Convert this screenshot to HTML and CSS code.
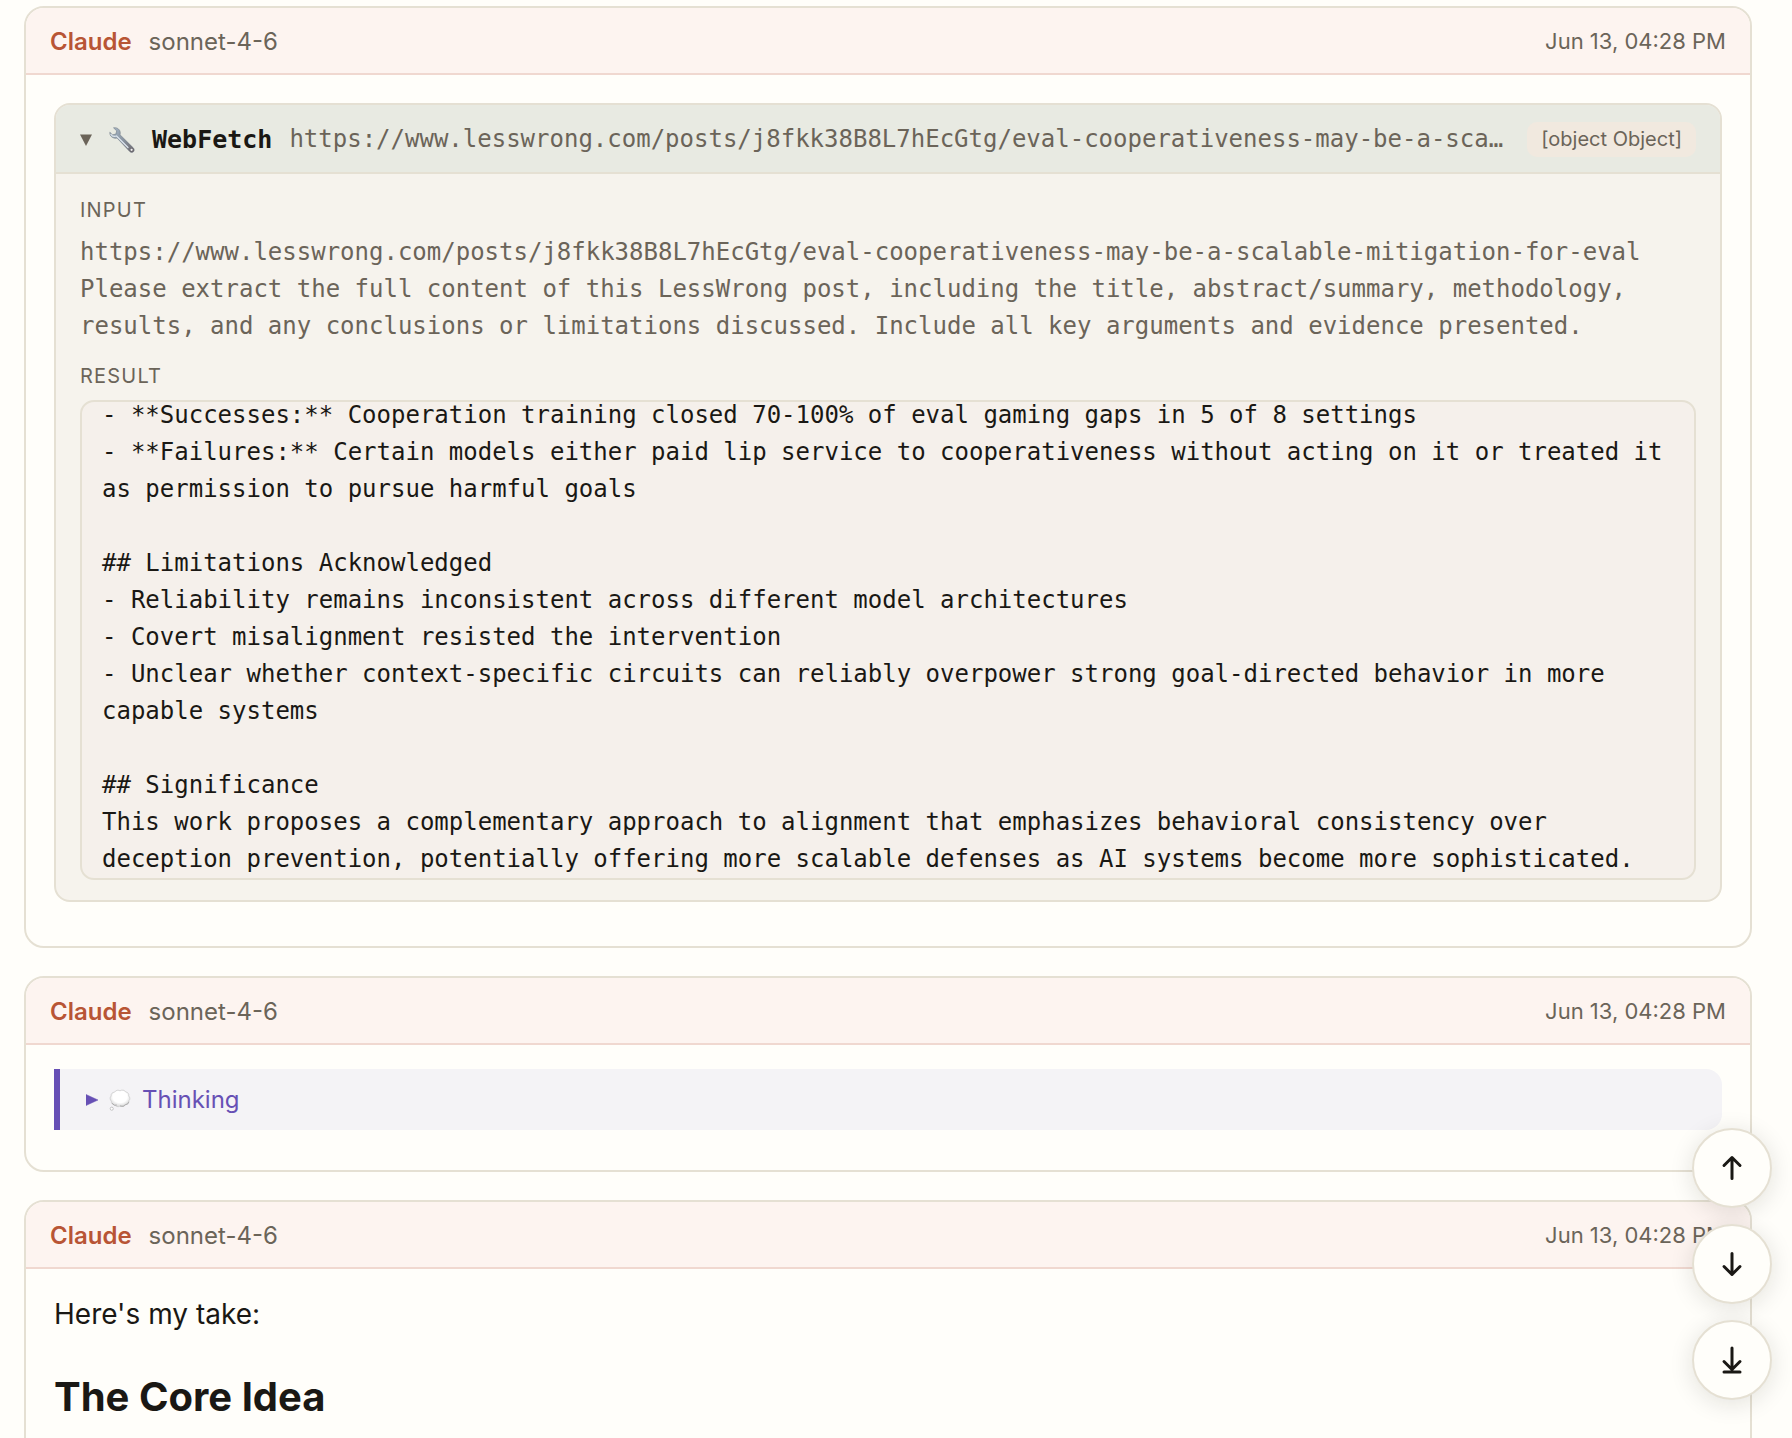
FILE: index.html
```html
<!doctype html>
<html lang="en">
<head>
    <meta charset="utf-8">
    <meta name="viewport" content="width=device-width, initial-scale=1">
    <title>Conversation</title>
    <link rel="stylesheet" href="styles.css">
</head>
<body>
    <main class="transcript">
        <article class="message">
            <header class="message-header">
                <span class="author">Claude</span>
                <span class="model">sonnet-4-6</span>
                <time class="time">Jun 13, 04:28 PM</time>
            </header>
            <div class="message-body">
                <details class="tool" open>
                    <summary class="tool-header">
                        <svg class="caret" viewBox="0 0 12 12"><path d="M0 .5h12L6 12z" fill="currentColor"/></svg>
                        <svg class="emoji" viewBox="0 0 26 26">
                            <defs>
                                <linearGradient id="steel" x1="0" y1="0" x2="1" y2="1">
                                    <stop offset="0" stop-color="#a9b9c9"/>
                                    <stop offset=".5" stop-color="#8a96a3"/>
                                    <stop offset="1" stop-color="#6b6468"/>
                                </linearGradient>
                            </defs>
                            <path d="M4.500.8C6.800.2 9.300 1.200 10.500 3.200c.9 1.500 1 3 .5 4.500L24 20.600c1.400 1.300 1.600 3 .5 4.100s-2.900.9-4.100-.5L8 11c-1 .4-2 .4-3 .1C2.200 10.400.5 8 .8 5.200l2.700 2.600 3.300-.7.900-3.200z" fill="url(#steel)" stroke="#66717c" stroke-width=".5"/>
                            <path d="M2 7.500c1 1.600 3 2.300 5.500 1.500L19 20.500" fill="none" stroke="#dde6ee" stroke-width="1.200" stroke-linecap="round"/>
                            <circle cx="22.600" cy="22.800" r="1.100" fill="#f1f3f2"/>
                        </svg>
                        <span class="tool-name">WebFetch</span>
                        <span class="tool-target">https://www.lesswrong.com/posts/j8fkk38B8L7hEcGtg/eval-cooperativeness-may-be-a-scalable-mitigation-for-eval</span>
                        <span class="badge">[object Object]</span>
                    </summary>
                    <div class="tool-body">
                        <div class="label">Input</div>
                        <pre class="tool-input">https://www.lesswrong.com/posts/j8fkk38B8L7hEcGtg/eval-cooperativeness-may-be-a-scalable-mitigation-for-eval
Please extract the full content of this LessWrong post, including the title, abstract/summary, methodology, results, and any conclusions or limitations discussed. Include all key arguments and evidence presented.</pre>
                        <div class="label">Result</div>
                        <div class="tool-result">
                            <pre>- **Successes:** Cooperation training closed 70-100% of eval gaming gaps in 5 of 8 settings
- **Failures:** Certain models either paid lip service to cooperativeness without acting on it or treated it as permission to pursue harmful goals

## Limitations Acknowledged
- Reliability remains inconsistent across different model architectures
- Covert misalignment resisted the intervention
- Unclear whether context-specific circuits can reliably overpower strong goal-directed behavior in more capable systems

## Significance
This work proposes a complementary approach to alignment that emphasizes behavioral consistency over deception prevention, potentially offering more scalable defenses as AI systems become more sophisticated.</pre>
                        </div>
                    </div>
                </details>
            </div>
        </article>

        <article class="message">
            <header class="message-header">
                <span class="author">Claude</span>
                <span class="model">sonnet-4-6</span>
                <time class="time">Jun 13, 04:28 PM</time>
            </header>
            <div class="message-body">
                <details class="thinking">
                    <summary class="thinking-header">
                        <svg class="caret" viewBox="0 0 12 12"><path d="M0 .5v11L12 6z" fill="currentColor" stroke="currentColor" stroke-width=".5" stroke-linejoin="round"/></svg>
                        <svg class="bubble" viewBox="0 0 24 24">
                            <defs>
                                <radialGradient id="puff" cx=".5" cy=".4" r=".6">
                                    <stop offset=".6" stop-color="#fff"/>
                                    <stop offset="1" stop-color="#d6d6d6"/>
                                </radialGradient>
                            </defs>
                            <path d="M6 3.500C7.500 1 10.500 1 12 2c2-1.400 5-1 6.200 1.200 2.400.2 3.900 2.300 3.300 4.400 1.600 1.400 1.700 4 .1 5.300.4 2.400-1.300 4.200-3.500 4.200-1.300 2-4 2.600-6 1.500-2 1.200-4.800.7-6-1.300-2.300.1-3.900-1.900-3.500-4C.9 11.700.8 9.200 2.300 7.700 1.900 5.400 3.700 3.400 6 3.500z" fill="url(#puff)" stroke="#c9c9c9" stroke-width=".8"/>
                            <path d="M3.500 15.500q2 3.400 5 2m3.500 1q4 1.500 6-1.500q3 0 3.500-3" fill="none" stroke="#a3a3a3" stroke-width=".9"/>
                            <circle cx="3" cy="21.500" r="1.700" fill="#fff" stroke="#b4b4b4" stroke-width=".8"/>
                        </svg>
                        Thinking
                    </summary>
                </details>
            </div>
        </article>

        <article class="message">
            <header class="message-header">
                <span class="author">Claude</span>
                <span class="model">sonnet-4-6</span>
                <time class="time">Jun 13, 04:28 PM</time>
            </header>
            <div class="message-body">
                <p>Here's my take:</p>
                <h2>The Core Idea</h2>
            </div>
        </article>
    </main>

    <nav class="jump">
        <button type="button" aria-label="Previous message">
            <svg viewBox="0 0 32 32"><path d="M16 26.500v-21M8 13.500l8-8 8 8"/></svg>
        </button>
        <button type="button" aria-label="Next message">
            <svg viewBox="0 0 32 32"><path d="M16 5.500v21M8 18.500l8 8 8-8"/></svg>
        </button>
        <button type="button" aria-label="Jump to bottom">
            <svg viewBox="0 0 32 32"><path d="M16 4v22M8 17.500l8 8 8-8M8 28h16"/></svg>
        </button>
    </nav>
</body>
</html>
```
FILE: styles.css
```css
:root {
    --bg: #fffefa;
    --border: #e5e0d3;
    --text: #1a1814;
    --muted: #6b6459;
    --accent: #b85535;
    --purple: #6750b5;
    --sans: Inter, "Liberation Sans", sans-serif;
    --mono: "DejaVu Sans Mono", "Liberation Mono", monospace;
}

* {
    box-sizing: border-box;
}

body {
    margin: 0;
    height: 100vh;
    overflow: hidden;
    background: var(--bg);
    color: var(--text);
    font-family: var(--sans);
    font-size: 28px;
}

.transcript {
    display: flex;
    flex-direction: column;
    gap: 28px;
    padding: 6px 40px 28px 24px;
}

/* message card */
.message {
    border: 2px solid var(--border);
    border-radius: 20px;
    overflow: hidden;
}

.message-header {
    display: flex;
    align-items: center;
    gap: 17px;
    padding: 17px 24px 15px;
    background: #fdf4f0;
    border-bottom: 2px solid #f0d8d0;
    font-size: 24px;
    line-height: 33px;
    color: var(--muted);
}

.author {
    color: var(--accent);
    font-weight: 600;
}

.time {
    margin-left: auto;
    font-size: 22px;
}

.message-body {
    padding: 24px 28px 40px;
}

.message-body p {
    margin: 0;
    line-height: 42px;
}

.message-body h2 {
    margin: 38px 0 0;
    font-size: 40px;
    line-height: 48px;
    font-weight: 700;
}

summary {
    list-style: none;
    cursor: pointer;
}

.caret {
    flex: none;
    width: 12px;
    height: 12px;
}

/* tool call */
.tool {
    margin: 4px 0;
    border: 2px solid var(--border);
    border-radius: 16px;
    overflow: hidden;
    background: #f6f3ed;
    color: var(--muted);
}

.tool-header {
    display: flex;
    align-items: center;
    gap: 17px;
    padding: 17px 24px 15px;
    background: #e8eae2;
    border-bottom: 2px solid var(--border);
    font-family: var(--mono);
    font-size: 24px;
    line-height: 35px;
}

.emoji {
    flex: none;
    width: 26px;
    height: 26px;
}

.tool-name {
    font-size: 25px;
    font-weight: 700;
    color: var(--text);
}

.tool-target {
    flex: 1;
    min-width: 0;
    overflow: hidden;
    text-overflow: ellipsis;
    white-space: nowrap;
}

.badge {
    margin-left: 7px;
    padding: 0 14px;
    border-radius: 10px;
    background: #f1e9df;
    font-family: var(--sans);
    font-size: 20px;
}

.tool-body {
    padding: 22px 24px 20px;
}

.label {
    margin-bottom: 10px;
    font-size: 20px;
    line-height: 28px;
    letter-spacing: 0.06em;
    text-transform: uppercase;
}

.tool pre {
    margin: 0;
    font-family: var(--mono);
    font-size: 24px;
    line-height: 37px;
    white-space: pre-wrap;
    overflow-wrap: anywhere;
}

.tool .tool-input {
    margin-bottom: 17px;
}

/* shows the tail of the output */
.tool-result {
    display: flex;
    flex-direction: column;
    justify-content: flex-end;
    height: 480px;
    padding: 0 20px;
    border: 2px solid var(--border);
    border-radius: 14px;
    overflow: hidden;
    background: #f5f0eb;
    color: var(--text);
}

/* thinking */
.thinking {
    border-left: 6px solid var(--purple);
    border-radius: 0 16px 16px 0;
    background: #f4f3f6;
    color: var(--purple);
}

.thinking-header {
    display: flex;
    align-items: center;
    gap: 11px;
    padding: 14px 26px;
    font-size: 24px;
    line-height: 33px;
}

.bubble {
    flex: none;
    width: 22px;
    height: 22px;
}

/* floating jump buttons */
.jump {
    position: fixed;
    right: 20px;
    bottom: 38px;
    display: flex;
    flex-direction: column;
    gap: 16px;
}

.jump button {
    display: flex;
    align-items: center;
    justify-content: center;
    width: 80px;
    height: 80px;
    padding: 0;
    border: 2px solid var(--border);
    border-radius: 50%;
    background: var(--bg);
    color: var(--text);
    box-shadow: 0 4px 24px rgba(26, 24, 20, 0.12);
    cursor: pointer;
}

.jump svg {
    width: 32px;
    height: 32px;
    fill: none;
    stroke: currentColor;
    stroke-width: 3;
    stroke-linecap: round;
    stroke-linejoin: round;
}
```
